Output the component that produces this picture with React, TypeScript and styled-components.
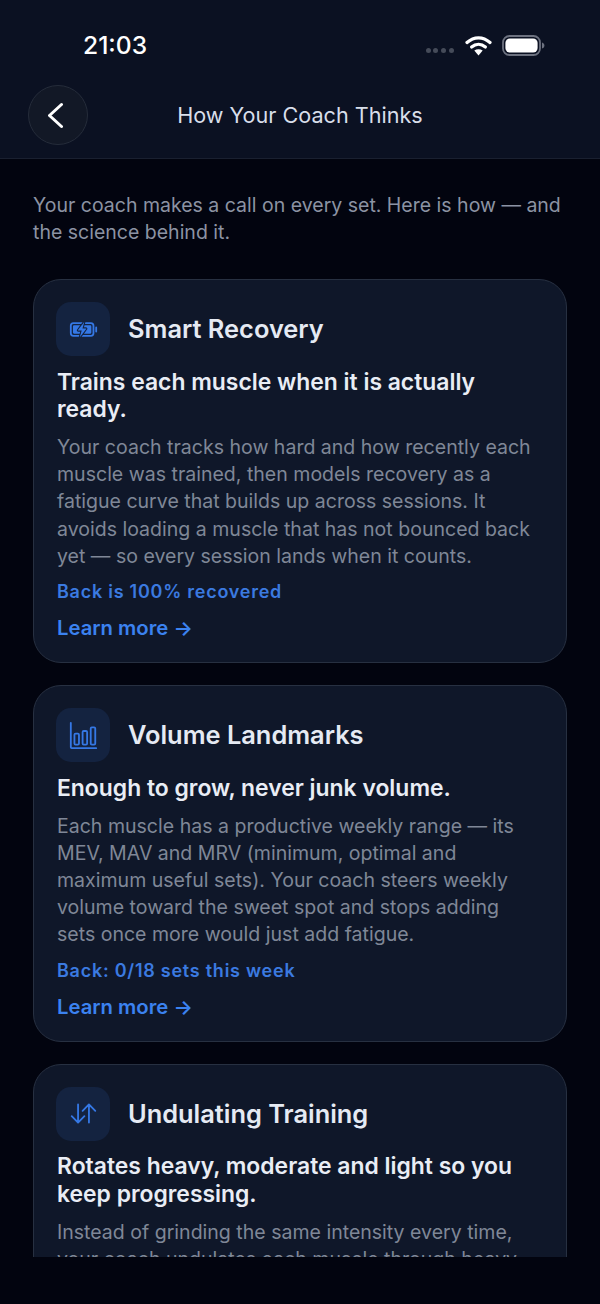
import React from 'react';
import styled, { createGlobalStyle } from 'styled-components';
import { IoBatteryChargingOutline, IoBarChartOutline, IoSwapVerticalOutline } from 'react-icons/io5';

const GlobalStyle = createGlobalStyle`
  html, body {
    margin: 0;
    padding: 0;
    background: #02040f;
  }
  * {
    box-sizing: border-box;
  }
`;

const Screen = styled.div`
  width: 600px;
  height: 1304px;
  background: #02040f;
  font-family: Inter, "Liberation Sans", sans-serif;
  overflow: hidden;
`;

const Header = styled.header`
  height: 159px;
  background: #0b1122;
  border-bottom: 1px solid #1a2030;
`;

const StatusBar = styled.div`
  height: 85px;
  padding: 30px 55px 0 83px;
  display: flex;
  align-items: flex-start;
  justify-content: space-between;
`;

const Time = styled.div`
  font-size: 24.6px;
  line-height: 30px;
  font-weight: 500;
  color: #ffffff;
`;

const StatusIcons = styled.div`
  display: flex;
  align-items: center;
  gap: 10px;
  height: 30px;
`;

const SignalDots = styled.div`
  display: flex;
  gap: 2.8px;
  margin-top: 11px;
  margin-right: 1px;
`;

const SignalDot = styled.span`
  width: 5px;
  height: 5px;
  border-radius: 50%;
  background: #454b59;
`;

const NavRow = styled.div`
  display: grid;
  grid-template-columns: 60px 1fr 60px;
  align-items: center;
  padding: 0 28px;
  height: 60px;
`;

const BackButton = styled.button`
  width: 60px;
  height: 60px;
  padding: 0;
  border-radius: 50%;
  background: #121826;
  border: 1px solid #252c3a;
  display: flex;
  align-items: center;
  justify-content: center;
`;

const NavTitle = styled.h1`
  margin: 0;
  text-align: center;
  font-size: 21.6px;
  line-height: 28px;
  font-weight: 400;
  color: #d8deea;
`;

const Viewport = styled.main`
  height: 1098px;
  overflow: hidden;
  padding: 33px 33px 0;
`;

const Intro = styled.p`
  margin: 0 0 33px;
  font-size: 19.5px;
  line-height: 27px;
  color: #8c93a3;
`;

const CardList = styled.div`
  display: flex;
  flex-direction: column;
  gap: 22px;
`;

const Card = styled.section`
  background: #0f1729;
  border: 1px solid #273041;
  border-radius: 28px;
  padding: 22px 27px 20px 23px;
`;

const CardHead = styled.div`
  display: flex;
  align-items: center;
  gap: 18px;
  margin-bottom: 12.5px;
`;

const IconTile = styled.div`
  width: 54px;
  height: 54px;
  margin-left: -1px;
  border-radius: 15px;
  background: #142340;
  color: #3578e5;
  display: flex;
  align-items: center;
  justify-content: center;
`;

const CardTitle = styled.h2`
  margin: 0;
  font-size: 25.4px;
  line-height: 32px;
  font-weight: 600;
  color: #e5eaf3;
`;

const Tagline = styled.h3`
  margin: 0 0 10.5px;
  font-size: 22.9px;
  line-height: 27.5px;
  font-weight: 600;
  color: #e9edf5;
`;

const Body = styled.p`
  margin: 0 0 9px;
  font-size: 19.55px;
  line-height: 27.2px;
  color: #7f8797;
`;

const Stat = styled.div`
  font-size: 18px;
  line-height: 26px;
  font-weight: 600;
  letter-spacing: 0.75px;
  color: #3b7ae0;
  margin-bottom: 9px;
`;

const LearnMore = styled.a`
  display: block;
  font-size: 20.3px;
  line-height: 28px;
  font-weight: 600;
  color: #3b82f0;
`;

const cards = [
  {
    icon: <IoBatteryChargingOutline size={29} />,
    title: 'Smart Recovery',
    tagline: 'Trains each muscle when it is actually ready.',
    body: 'Your coach tracks how hard and how recently each muscle was trained, then models recovery as a fatigue curve that builds up across sessions. It avoids loading a muscle that has not bounced back yet — so every session lands when it counts.',
    stat: 'Back is 100% recovered',
    more: true,
  },
  {
    icon: <IoBarChartOutline size={29} />,
    title: 'Volume Landmarks',
    tagline: 'Enough to grow, never junk volume.',
    body: 'Each muscle has a productive weekly range — its MEV, MAV and MRV (minimum, optimal and maximum useful sets). Your coach steers weekly volume toward the sweet spot and stops adding sets once more would just add fatigue.',
    stat: 'Back: 0/18 sets this week',
    more: true,
  },
  {
    icon: <IoSwapVerticalOutline size={29} />,
    title: 'Undulating Training',
    tagline: 'Rotates heavy, moderate and light so you keep progressing.',
    body: 'Instead of grinding the same intensity every time, your coach undulates each muscle through heavy',
    stat: '',
    more: false,
  },
];

const App: React.FC = () => {
  return (
    <Screen>
      <GlobalStyle />
      <Header>
        <StatusBar>
          <Time>21:03</Time>
          <StatusIcons>
            <SignalDots>
              <SignalDot />
              <SignalDot />
              <SignalDot />
              <SignalDot />
            </SignalDots>
            <svg width="27" height="21" viewBox="0 0 27 21" fill="none">
              <path d="M2 7.5C9 1.2 18 1.2 25 7.5" stroke="#fff" strokeWidth="3.2" strokeLinecap="round" />
              <path d="M6.6 12C10.8 8.4 16.2 8.4 20.4 12" stroke="#fff" strokeWidth="3.2" strokeLinecap="round" />
              <path d="M13.5 20.5L9.3 15.6C11.8 13.8 15.2 13.8 17.7 15.6Z" fill="#fff" />
            </svg>
            <svg width="43" height="21" viewBox="0 0 43 21" fill="none">
              <rect x="1" y="1" width="37" height="19" rx="6.5" stroke="#6d7280" strokeWidth="1.8" />
              <rect x="3.4" y="3.4" width="32.2" height="14.2" rx="4.5" fill="#fff" />
              <path d="M40 7.5C41.6 8 42.4 9 42.4 10.5C42.4 12 41.6 13 40 13.5Z" fill="#6d7280" />
            </svg>
          </StatusIcons>
        </StatusBar>
        <NavRow>
          <BackButton aria-label="Back">
            <svg width="20" height="30" viewBox="0 0 20 30" fill="none">
              <path d="M13.5 4.5L1.5 15.5L13.5 26.5" stroke="#fff" strokeWidth="3" strokeLinecap="round" strokeLinejoin="round" />
            </svg>
          </BackButton>
          <NavTitle>How Your Coach Thinks</NavTitle>
        </NavRow>
      </Header>
      <Viewport>
        <Intro>Your coach makes a call on every set. Here is how — and the science behind it.</Intro>
        <CardList>
          {cards.map((card) => (
            <Card key={card.title}>
              <CardHead>
                <IconTile>{card.icon}</IconTile>
                <CardTitle>{card.title}</CardTitle>
              </CardHead>
              <Tagline>{card.tagline}</Tagline>
              <Body>{card.body}</Body>
              {card.stat && <Stat>{card.stat}</Stat>}
              {card.more && <LearnMore>Learn more →</LearnMore>}
            </Card>
          ))}
        </CardList>
      </Viewport>
    </Screen>
  );
};

export default App;
